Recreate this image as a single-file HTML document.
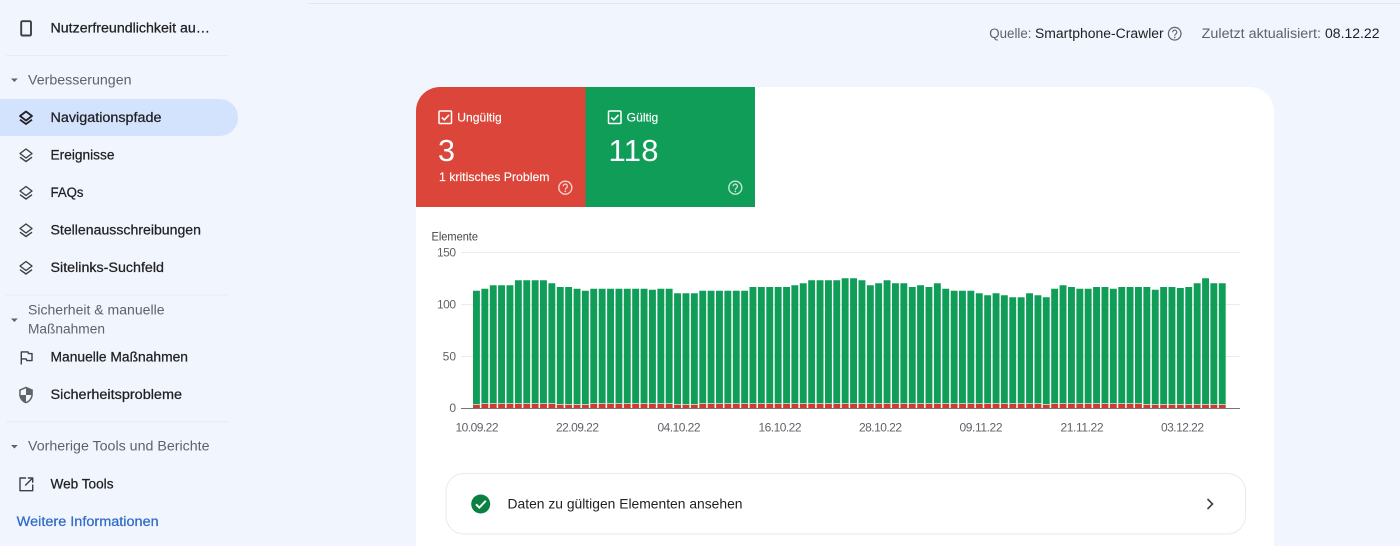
<!DOCTYPE html>
<html lang="de">
<head>
<meta charset="utf-8">
<title>Search Console</title>
<style>
html,body{margin:0;padding:0;background:#f1f5fd;overflow:hidden;width:1400px;height:546px}
svg{display:block}
text{font-family:"Liberation Sans",Arial,sans-serif}
.n{font-size:13.5px;fill:#202124;stroke:#202124;stroke-width:.25}
.h{font-size:13.5px;fill:#5f6368}
.t{font-size:12px;fill:#fff;stroke:#fff;stroke-width:.15}
.b{font-size:31px;fill:#fff}
.a{font-size:12px;fill:#5f6368}
.d{font-size:14px;fill:#202124}
.ic{fill:none;stroke:#3c4043;stroke-width:1.4;stroke-linejoin:round}
</style>
</head>
<body>
<svg width="1400" height="546" viewBox="0 0 1400 546" xmlns="http://www.w3.org/2000/svg">
<rect width="1400" height="546" fill="#f1f5fd"/>
<path d="M308 3.5H1400" stroke="#e3e7ef" stroke-width="1"/>

<!-- sidebar -->
<path d="M0 99H219.500a18.500 18.500 0 0 1 0 37H0z" fill="#d3e3fd"/>
<path d="M6 55.500H228M6 295H228M6 421.700H228" stroke="#e8ebf2" stroke-width="1"/>

<rect x="21.200" y="21.200" width="9.800" height="14.300" rx="1.200" fill="none" stroke="#3c4043" stroke-width="1.900"/>
<text class="n" x="50.500" y="32.500" textLength="159.500" lengthAdjust="spacingAndGlyphs">Nutzerfreundlichkeit au…</text>

<path d="M11 78.500h6.800L14.400 82z" fill="#5f6368"/>
<text class="h" x="28" y="84.500" textLength="103.500" lengthAdjust="spacingAndGlyphs">Verbesserungen</text>

<g class="ic" style="stroke:#202124;stroke-width:1.800">
<path d="M26 111.500L32 116L26 120.500L20 116z"/><path d="M20 119.700L26 124L32 119.700"/>
</g>
<text class="n" x="50.500" y="122" textLength="111" lengthAdjust="spacingAndGlyphs">Navigationspfade</text>

<g class="ic">
<path d="M26 149L32 153.500L26 158L20 153.500z"/><path d="M20 157.200L26 161.500L32 157.200"/>
</g>
<text class="n" x="50.500" y="159.500" textLength="64" lengthAdjust="spacingAndGlyphs">Ereignisse</text>

<g class="ic">
<path d="M26 186.500L32 191L26 195.500L20 191z"/><path d="M20 194.700L26 199L32 194.700"/>
</g>
<text class="n" x="50.500" y="197" textLength="33" lengthAdjust="spacingAndGlyphs">FAQs</text>

<g class="ic">
<path d="M26 224L32 228.500L26 233L20 228.500z"/><path d="M20 232.200L26 236.500L32 232.200"/>
</g>
<text class="n" x="50.500" y="234.500" textLength="150.500" lengthAdjust="spacingAndGlyphs">Stellenausschreibungen</text>

<g class="ic">
<path d="M26 261.500L32 266L26 270.500L20 266z"/><path d="M20 269.700L26 274L32 269.700"/>
</g>
<text class="n" x="50.500" y="272" textLength="113.500" lengthAdjust="spacingAndGlyphs">Sitelinks-Suchfeld</text>

<path d="M11 318.500h6.800L14.400 322z" fill="#5f6368"/>
<text class="h" x="28" y="314.700" textLength="136.500" lengthAdjust="spacingAndGlyphs">Sicherheit &amp; manuelle</text>
<text class="h" x="28" y="333.300" textLength="77" lengthAdjust="spacingAndGlyphs">Maßnahmen</text>

<path d="M21.300 364.500V351.900H28L28.400 353.600H32V360.600H26.800L26.300 358.900H21.300" class="ic" stroke-linejoin="miter"/>
<text class="n" x="50.500" y="361.700" textLength="137.500" lengthAdjust="spacingAndGlyphs">Manuelle Maßnahmen</text>

<path transform="translate(16.880 385.880) scale(.76)" d="M12 1L3 5v6c0 5.550 3.840 10.740 9 12 5.160-1.260 9-6.450 9-12V5l-9-4zm0 10.990h7c-.530 4.120-3.280 7.790-7 8.940V12H5V6.300l7-3.110v8.800z" fill="#5f6368"/>
<text class="n" x="50.500" y="399" textLength="131.500" lengthAdjust="spacingAndGlyphs">Sicherheitsprobleme</text>

<path d="M11 445h6.800L14.400 448.500z" fill="#5f6368"/>
<text class="h" x="28" y="450.700" textLength="181.500" lengthAdjust="spacingAndGlyphs">Vorherige Tools und Berichte</text>

<path d="M26 478H20V490.700H32.700V484.500M27.800 478H32.700V482.800M32.700 478L25.200 485.500" class="ic" stroke-linejoin="miter"/>
<text class="n" x="50.500" y="488.300" textLength="63" lengthAdjust="spacingAndGlyphs">Web Tools</text>

<text x="16.700" y="526" font-size="13.500" fill="#2f6bc9" stroke="#2f6bc9" stroke-width=".25" textLength="142" lengthAdjust="spacingAndGlyphs">Weitere Informationen</text>

<!-- header info -->
<text class="h" x="989.300" y="38" textLength="42.200" lengthAdjust="spacingAndGlyphs">Quelle:</text>
<text x="1035" y="38" font-size="13.500" fill="#202124" textLength="128.700" lengthAdjust="spacingAndGlyphs">Smartphone-Crawler</text>
<circle cx="1174.700" cy="33.700" r="6.300" fill="none" stroke="#5f6368" stroke-width="1.200"/>
<path d="M1172.600 32.200a2.100 2.100 0 1 1 3.300 1.700c-.8.6-1.200 1-1.200 1.800" fill="none" stroke="#5f6368" stroke-width="1.100"/>
<circle cx="1174.700" cy="37.400" r=".8" fill="#5f6368"/>
<text class="h" x="1201.700" y="38" textLength="119.300" lengthAdjust="spacingAndGlyphs">Zuletzt aktualisiert:</text>
<text x="1325" y="38" font-size="13.500" fill="#202124" textLength="54.500" lengthAdjust="spacingAndGlyphs">08.12.22</text>

<!-- card -->
<path d="M416 546V111a24 24 0 0 1 24-24H1250a24 24 0 0 1 24 24V546z" fill="#fff"/>
<path d="M416 207V111a24 24 0 0 1 24-24H585.500V207z" fill="#dc4539"/>
<rect x="585.500" y="87" width="169.500" height="120" fill="#0f9d58"/>

<!-- red tile -->
<rect x="439" y="111" width="12.500" height="12.500" rx="1" fill="none" stroke="#fff" stroke-width="1.500"/>
<path d="M441.800 117.400l2.500 2.500 4.700-5" fill="none" stroke="#fff" stroke-width="1.600"/>
<text class="t" x="457.300" y="121.300" textLength="44.400" lengthAdjust="spacingAndGlyphs">Ungültig</text>
<text class="b" x="438" y="161" textLength="17" lengthAdjust="spacingAndGlyphs">3</text>
<text class="t" x="439" y="181" textLength="110.500" lengthAdjust="spacingAndGlyphs">1 kritisches Problem</text>
<g opacity=".75">
<circle cx="565.300" cy="187.700" r="6.500" fill="none" stroke="#fff" stroke-width="1.400"/>
<path d="M563.200 186.200a2.100 2.100 0 1 1 3.300 1.700c-.8.6-1.200 1-1.200 1.900" fill="none" stroke="#fff" stroke-width="1.300"/>
<circle cx="565.300" cy="191.400" r=".9" fill="#fff"/>
</g>

<!-- green tile -->
<rect x="608.500" y="111" width="12.500" height="12.500" rx="1" fill="none" stroke="#fff" stroke-width="1.500"/>
<path d="M611.300 117.400l2.500 2.500 4.700-5" fill="none" stroke="#fff" stroke-width="1.600"/>
<text class="t" x="626.700" y="121.300" textLength="31.600" lengthAdjust="spacingAndGlyphs">Gültig</text>
<text class="b" x="608.500" y="161" textLength="50">118</text>
<g opacity=".75">
<circle cx="735.300" cy="187.700" r="6.500" fill="none" stroke="#fff" stroke-width="1.400"/>
<path d="M733.200 186.200a2.100 2.100 0 1 1 3.300 1.700c-.8.6-1.200 1-1.200 1.900" fill="none" stroke="#fff" stroke-width="1.300"/>
<circle cx="735.300" cy="191.400" r=".9" fill="#fff"/>
</g>

<!-- chart -->
<text x="431.500" y="240.300" font-size="11.500" fill="#444" textLength="46.500" lengthAdjust="spacingAndGlyphs">Elemente</text>
<path d="M461 252.500H1240M461 304.500H1240M461 356.500H1240" stroke="#ebebeb" stroke-width="1"/>
<g font-size="12" fill="#5f6368" text-anchor="end">
<text x="456" y="256.700" textLength="19">150</text>
<text x="456" y="308.500" textLength="19">100</text>
<text x="456" y="360.500">50</text>
<text x="456" y="412">0</text>
</g>

<path fill="#0f9d58" d="
M473 290.700h6.900V404.400h-6.900z
M481.400 288.700h6.900V403.400h-6.900z
M489.800 285.300h6.900V403.400h-6.900z
M498.100 285.300h6.900V403.400h-6.900z
M506.500 285.300h6.900V403.400h-6.900z
M514.900 280.300h6.900V403.400h-6.900z
M523.300 280.300h6.900V403.400h-6.900z
M531.700 280.300h6.900V403.400h-6.900z
M540 280.300h6.900V403.400h-6.900z
M548.400 283.300h6.900V403.400h-6.900z
M556.800 287h6.900V404.400h-6.900z
M565.200 287h6.900V404.400h-6.900z
M573.600 288.700h6.900V404.400h-6.900z
M581.900 290.700h6.900V404.400h-6.900z
M590.300 288.700h6.900V403.400h-6.900z
M598.700 288.700h6.900V403.400h-6.900z
M607.100 288.700h6.900V403.400h-6.900z
M615.500 288.700h6.900V403.400h-6.900z
M623.800 288.700h6.900V403.400h-6.900z
M632.200 288.700h6.900V403.400h-6.900z
M640.600 288.700h6.900V403.400h-6.900z
M649 289.700h6.900V403.400h-6.900z
M657.400 288.700h6.900V403.400h-6.900z
M665.700 288.700h6.900V403.400h-6.900z
M674.100 293.300h6.900V404.400h-6.900z
M682.500 293.300h6.900V404.400h-6.900z
M690.900 293.300h6.900V404.400h-6.900z
M699.300 290.700h6.900V403.400h-6.900z
M707.600 290.700h6.900V403.400h-6.900z
M716 290.700h6.900V403.400h-6.900z
M724.400 290.700h6.900V403.400h-6.900z
M732.800 290.700h6.900V403.400h-6.900z
M741.200 290.700h6.900V403.400h-6.900z
M749.500 287h6.900V403.400h-6.900z
M757.900 287h6.900V403.400h-6.900z
M766.300 287h6.900V403.400h-6.900z
M774.700 287h6.900V403.400h-6.900z
M783.100 287h6.900V403.400h-6.900z
M791.400 285.300h6.900V403.400h-6.900z
M799.800 283.300h6.900V403.400h-6.900z
M808.200 280.300h6.900V403.400h-6.900z
M816.600 280.300h6.900V403.400h-6.900z
M825 280.300h6.900V403.400h-6.900z
M833.300 280.300h6.900V403.400h-6.900z
M841.700 278.300h6.900V403.400h-6.900z
M850.100 278.300h6.900V403.400h-6.900z
M858.500 280.300h6.900V403.400h-6.900z
M866.900 285.300h6.900V403.400h-6.900z
M875.200 283.300h6.900V403.400h-6.900z
M883.600 280.300h6.900V403.400h-6.900z
M892 283.300h6.900V403.400h-6.900z
M900.400 283.300h6.900V403.400h-6.900z
M908.800 287h6.900V403.400h-6.900z
M917.100 285.300h6.900V403.400h-6.900z
M925.500 287h6.900V403.400h-6.900z
M933.900 283.300h6.900V403.400h-6.900z
M942.300 288.700h6.900V403.400h-6.900z
M950.700 290.700h6.900V403.400h-6.900z
M959 290.700h6.900V403.400h-6.900z
M967.400 290.700h6.900V403.400h-6.900z
M975.800 293.300h6.900V403.400h-6.900z
M984.200 295.300h6.900V403.400h-6.900z
M992.600 293.300h6.900V403.400h-6.900z
M1000.900 295.300h6.900V403.400h-6.900z
M1009.300 297.300h6.900V403.400h-6.900z
M1017.700 297.300h6.900V403.400h-6.900z
M1026.100 293.300h6.900V403.400h-6.900z
M1034.500 295.300h6.900V403.400h-6.900z
M1042.800 297.300h6.900V404.400h-6.900z
M1051.200 288.700h6.900V403.400h-6.900z
M1059.600 285.300h6.900V403.400h-6.900z
M1068 287h6.900V403.400h-6.900z
M1076.400 288.700h6.900V403.400h-6.900z
M1084.700 288.700h6.900V403.400h-6.900z
M1093.100 287h6.900V403.400h-6.900z
M1101.500 287h6.900V403.400h-6.900z
M1109.900 288.700h6.900V403.400h-6.900z
M1118.300 287h6.900V403.400h-6.900z
M1126.600 287h6.900V403.400h-6.900z
M1135 287h6.900V403.400h-6.900z
M1143.400 287h6.900V404.400h-6.900z
M1151.800 289.700h6.900V404.400h-6.900z
M1160.200 287h6.900V404.400h-6.900z
M1168.500 287h6.900V404.400h-6.900z
M1176.900 288h6.900V404.400h-6.900z
M1185.300 287h6.900V404.400h-6.900z
M1193.700 283.300h6.900V404.400h-6.900z
M1202.100 278.300h6.900V404.400h-6.900z
M1210.400 283.300h6.900V404.400h-6.900z
M1218.800 283.300h6.900V404.400h-6.900z"/>

<g fill="none" stroke="#d33a2f" stroke-dasharray="6.900 1.480">
<g stroke-width="4">
<path d="M481.400 406H556"/>
<path d="M590.300 406H673"/>
<path d="M699.300 406H1042"/>
<path d="M1051.200 406H1142.300"/>
</g>
<g stroke-width="3">
<path d="M473 406.500H480.300"/>
<path d="M556.800 406.500H589.200"/>
<path d="M674.100 406.500H698.200"/>
<path d="M1042.800 406.500H1050.100"/>
<path d="M1143.400 406.500H1226.100"/>
</g>
</g>
<path d="M461 408.500H1240" stroke="#757575" stroke-width="1"/>

<g class="a" text-anchor="middle">
<text x="477" y="431.700" textLength="43">10.09.22</text>
<text x="577.500" y="431.700" textLength="43">22.09.22</text>
<text x="679" y="431.700" textLength="43">04.10.22</text>
<text x="780" y="431.700" textLength="43">16.10.22</text>
<text x="880.500" y="431.700" textLength="43">28.10.22</text>
<text x="981" y="431.700" textLength="43">09.11.22</text>
<text x="1082" y="431.700" textLength="43">21.11.22</text>
<text x="1182.500" y="431.700" textLength="43">03.12.22</text>
</g>

<!-- button row -->
<rect x="446" y="473.500" width="799.500" height="60.500" rx="18" fill="#fff" stroke="#e8eaed" stroke-width="1"/>
<circle cx="480.700" cy="504" r="9.500" fill="#0b8043"/>
<path d="M476 504.300l3.300 3.300 6.500-6.800" fill="none" stroke="#fff" stroke-width="1.900"/>
<text class="d" x="507.500" y="508.300" textLength="235" lengthAdjust="spacingAndGlyphs">Daten zu gültigen Elementen ansehen</text>
<path d="M1207.500 499l5 5-5 5" fill="none" stroke="#3c4043" stroke-width="1.600"/>
</svg>
</body>
</html>
